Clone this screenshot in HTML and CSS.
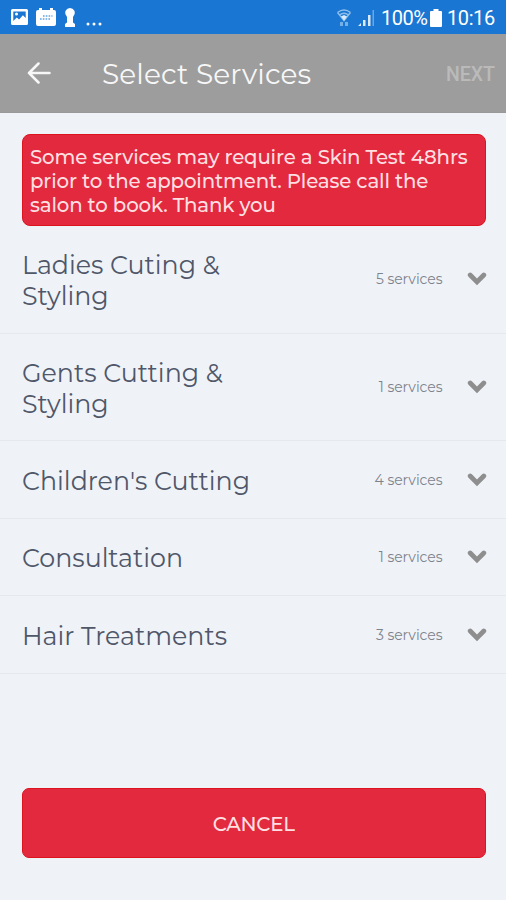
FILE: index.html
```html
<!DOCTYPE html>
<html lang="en">
<head>
<meta charset="utf-8">
<title>Select Services</title>
<link rel="stylesheet" href="styles.css">
</head>
<body>
<svg class="symbols" aria-hidden="true">
  <symbol id="chevron" viewBox="0 0 20 14"><path d="M3.200 3 10 9.900 16.800 3" fill="none" stroke="currentColor" stroke-width="4.800" stroke-linecap="round" stroke-linejoin="miter"/></symbol>
</svg>
<div class="status-bar">
  <div class="status-icons">
    <svg width="17" height="16" viewBox="0 0 17 16"><path fill="#fff" fill-rule="evenodd" d="M1.500 0h14Q17 0 17 1.500v13Q17 16 15.500 16h-14Q0 16 0 14.500v-13Q0 0 1.500 0ZM2.300 2.500v9.500l3.500-3.500 2.300 2 3.800-4.300 2.800 2.800V2.500Z"/><circle cx="5.500" cy="5" r="1.500" fill="#fff"/></svg>
    <svg width="20" height="18" viewBox="0 0 20 18"><path fill="#fff" d="M2 2h1V0h3v2h8V0h3v2h1q2 0 2 2v12q0 2-2 2H2q-2 0-2-2V4q0-2 2-2Z"/><path stroke="#5fa2e2" stroke-width="1.600" stroke-dasharray="1.600 1.200" d="M7 8h9.500M4 11h10"/></svg>
    <svg class="keyhole" width="12" height="19" viewBox="0 0 12 19"><path fill="#fff" d="M6 0a4.700 4.700 0 0 1 3.800 7.500L9 9v5.500l2 1.500v3H1v-3l2-1.500V9l-.8-1.500A4.700 4.700 0 0 1 6 0Z"/></svg>
    <svg class="dots" width="16" height="4" viewBox="0 0 16 4" fill="#fff"><circle cx="2" cy="2" r="1.500"/><circle cx="8" cy="2" r="1.500"/><circle cx="14" cy="2" r="1.500"/></svg>
  </div>
  <div class="status-info">
    <svg width="14" height="18" viewBox="0 0 14 18"><g fill="none" stroke="#8dbeeb" stroke-width="1.500"><path d="M.5 3.500Q7-1.500 13.500 3.500M2.500 6Q7 2.500 11.500 6M.5 3.500 7 11.500 13.500 3.500"/></g><path fill="#d9eafa" d="m4 7.500 3-1.500 3 1.500L7 11.500Z"/><path fill="#75afe7" d="M3 17v-4h3v4zM8 13h3v4H8z"/></svg>
    <svg class="signal" width="18" height="18" viewBox="0 0 18 18"><path fill="#d9eafa" d="M1 17l3-3v3zM6 11h2.500v6H6zM11 6h2.500v11H11z"/><path fill="#68a8e5" d="M15.500 1H17v16h-1.500z"/></svg>
    <span class="percent">100%</span>
    <svg class="battery" width="12" height="18" viewBox="0 0 12 18"><path fill="#fff" d="M3.500 0h5v2H11q1 0 1 1v14q0 1-1 1H1q-1 0-1-1V3q0-1 1-1h2.500z"/></svg>
    <span class="clock">10:16</span>
  </div>
</div>
<header class="app-bar">
  <svg class="back" width="24" height="22" viewBox="0 0 24 22"><path d="M11.500 1.500 2 11l9.500 9.500M2 11h20.500" fill="none" stroke="#f7f7f7" stroke-width="2.500" stroke-linecap="round" stroke-linejoin="round"/></svg>
  <h1>Select Services</h1>
  <span class="next">NEXT</span>
</header>
<main>
  <p class="notice">Some services may require a Skin Test 48hrs<br>prior to the appointment. Please call the<br>salon to book. Thank you</p>
  <ul class="services">
    <li class="tall"><span class="name">Ladies Cuting &amp;<br>Styling</span><span class="count">5 services</span><svg class="chevron"><use href="#chevron"/></svg></li>
    <li class="tall"><span class="name">Gents Cutting &amp;<br>Styling</span><span class="count">1 services</span><svg class="chevron"><use href="#chevron"/></svg></li>
    <li><span class="name">Children's Cutting</span><span class="count">4 services</span><svg class="chevron"><use href="#chevron"/></svg></li>
    <li><span class="name">Consultation</span><span class="count">1 services</span><svg class="chevron"><use href="#chevron"/></svg></li>
    <li><span class="name">Hair Treatments</span><span class="count">3 services</span><svg class="chevron"><use href="#chevron"/></svg></li>
  </ul>
  <button class="cancel">CANCEL</button>
</main>
</body>
</html>
```
FILE: styles.css
```css
* { box-sizing: border-box; }
body {
  margin: 0;
  height: 900px;
  display: flex;
  flex-direction: column;
  background: #eff3f8;
  font-family: Montserrat, Inter, sans-serif;
  overflow: hidden;
}
.symbols { display: none; }
svg { display: block; flex: none; }
.status-bar {
  height: 34px;
  flex: none;
  display: flex;
  justify-content: space-between;
  padding: 0 11px;
  background: #1976d2;
  color: #fff;
  font: 20px/36px Roboto, sans-serif;
}
.status-icons, .status-info { display: flex; align-items: center; }
.status-info { padding-top: 1px; }
.status-icons { gap: 8px; }
.dots { margin: 13px 0 0 2px; }
.signal { margin: 0 6px 0 6px; }
.percent { width: 45px; letter-spacing: -0.5px; }
.battery { margin: 0 5px 0 4px; }
.clock { width: 48px; letter-spacing: -0.4px; }
.app-bar {
  height: 79px;
  flex: none;
  display: flex;
  align-items: center;
  padding: 0 11px 0 27px;
  background: #9d9d9d;
  border-bottom: 1px solid #999;
  color: #f7f7f7;
}
.back { margin-top: -1px; }
h1 {
  margin: 2px 0 0 51px;
  flex: 1;
  font-size: 28px;
  font-weight: 400;
  letter-spacing: 0.1px;
  white-space: nowrap;
}
.next {
  font: 500 19.5px/24px Roboto, sans-serif;
  color: #bababa;
  margin-top: 3px;
}
main {
  flex: 1;
  display: flex;
  flex-direction: column;
  padding: 21px 0 42px;
}
.notice {
  margin: 0 20px 0 21.5px;
  height: 91.5px;
  padding: 10px 7.5px;
  border: 1px solid #db1420;
  border-radius: 8px;
  background: #e3293d;
  color: #ffdfe1;
  font-size: 19.75px;
  font-weight: 500;
  letter-spacing: -0.15px;
  line-height: 24px;
  white-space: nowrap;
}
.services { list-style: none; margin: 0; padding: 0; }
li {
  height: 77.5px;
  display: flex;
  align-items: center;
  padding: 1px 19.5px 0 22px;
  border-bottom: 1px solid #e5e9ed;
}
li.tall { height: 107.5px; }
li.tall:first-child { height: 108px; padding-top: 0; }
li.tall .count { margin-top: -1px; }
.name {
  flex: 1;
  padding-top: 3px;
  font-size: 25.3px;
  line-height: 31px;
  color: #505769;
}
.count { font-size: 14px; letter-spacing: -0.05px; color: #7e828c; }
.chevron { width: 20px; height: 14px; margin-left: 24px; color: #8e8e8e; }
.cancel {
  margin: auto 20px 0 21.5px;
  height: 70.5px;
  padding: 3px 0 0;
  border: 1px solid #db1420;
  border-radius: 7px;
  background: #e3293d;
  color: #ffdfe1;
  font: 500 19.75px/24px Montserrat, Inter, sans-serif;
  letter-spacing: -0.2px;
}
```
